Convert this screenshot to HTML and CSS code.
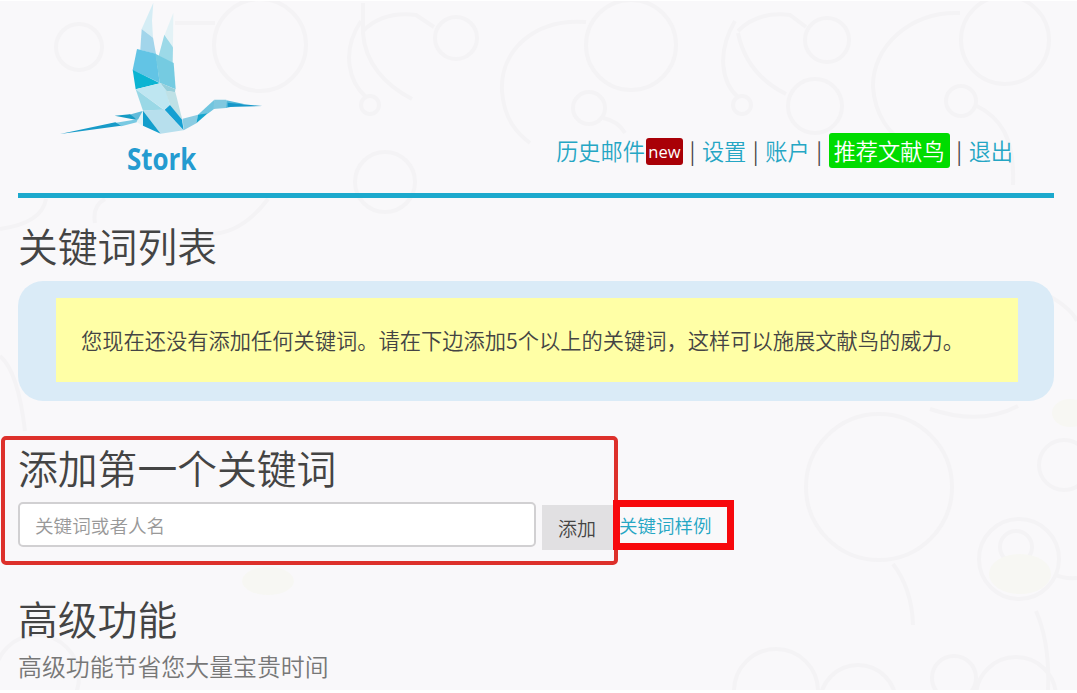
FILE: index.html
```html
<!DOCTYPE html>
<html lang="zh-CN">
<head>
    <meta charset="UTF-8">
    <title>Stork 文献鸟</title>
    <link rel="stylesheet" href="styles.css">
</head>
<body>
    <div class="page">
        <!-- background bubbles -->
        <svg class="bubbles" viewBox="0 0 1077 689" aria-hidden="true">
            <g class="lines">
                <circle cx="79" cy="46" r="23"/>
                <circle cx="260" cy="44" r="46"/>
                <circle cx="456" cy="37" r="21"/>
                <circle cx="631" cy="44" r="45"/>
                <circle cx="827" cy="39" r="22"/>
                <circle cx="1005" cy="39" r="44"/>
                <circle cx="370" cy="104" r="9"/>
                <circle cx="742" cy="104" r="9"/>
                <circle cx="589" cy="107" r="16"/>
                <circle cx="961" cy="100" r="15"/>
                <circle cx="815" cy="105" r="27"/>
                <circle cx="385" cy="181" r="30"/>
                <circle cx="879" cy="486" r="73"/>
                <circle cx="1064" cy="464" r="25"/>
                <circle cx="1019" cy="558" r="40"/>
                <circle cx="1016" cy="546" r="16"/>
                <circle cx="954" cy="677" r="22"/>
                <circle cx="1016" cy="696" r="40"/>
                <circle cx="776" cy="690" r="42"/>
                <circle cx="858" cy="702" r="38"/>
                <circle cx="37" cy="676" r="42"/>
                <path d="M175 22H215M363 2V32C365 62 385 84 412 98M361 20C340 52 350 82 366 96M735 20C716 52 722 82 738 96M738 32C745 66 768 84 786 93M363 30Q383 10 416 14L434 26M738 30Q758 10 790 14L806 26"/>
                <path d="M586 21C535 17 500 49 502 90C504 119 518 133 530 142M960 12C910 10 872 46 873 86C875 115 890 133 905 142M975 104C1000 116 1015 136 1013 184M603 117Q618 120 625 132"/>
                <path d="M893 563Q912 588 913 624M1036 610Q1050 642 1048 689M1054 573Q1063 578 1077 577M0 228Q42 222 46 198M0 355Q18 370 25 430M930 408Q980 425 1018 405M1040 290Q1070 305 1077 320M268 198Q240 235 205 233M95 222Q92 205 105 198"/>
            </g>
            <ellipse class="spot" cx="1020" cy="573" rx="31" ry="20"/>
            <ellipse class="spot" cx="268" cy="580" rx="26" ry="14"/>
            <ellipse class="spot" cx="1070" cy="412" rx="18" ry="14"/>
        </svg>

        <div class="content">
            <header class="header">
                <svg class="logo" viewBox="0 0 660 540" role="img" aria-label="Stork">
                    <polygon fill="#d5edf5" points="310,8 275,87 309,113 306,62"/>
                    <polygon fill="#e3f2f6" points="370,38 344,104 369,142"/>
                    <polygon fill="#a2d5eb" points="275,87 309,113 318,162 271,150"/>
                    <polygon fill="#9cd9e8" points="343,104 369,142 368,190 326,168"/>
                    <polygon fill="#62c4e5" points="261,147 318,161 329,248 248,210"/>
                    <polygon fill="#75cbe1" points="316,161 371,189 377,268 329,248"/>
                    <polygon fill="#0bb4d2" points="248,209 330,250 257,268"/>
                    <polygon fill="#bee6f1" points="257,268 330,250 348,270 360,316 342,329"/>
                    <polygon fill="#96cfdb" points="330,248 376,268 375,277 350,273"/>
                    <polygon fill="#bfe1e6" points="346,272 376,276 399,367 360,315"/>
                    <polygon fill="#9ad8e6" points="257,268 342,330 279,332"/>
                    <polygon fill="#b7dfed" points="279,332 342,328 400,391 332,401"/>
                    <polygon fill="#149fd2" points="360,315 344,329 401,391 396,359"/>
                    <polygon fill="#139ecc" points="279,332 332,401 279,377"/>
                    <polygon fill="#e4f3f6" points="279,332 279,378 260,366"/>
                    <polygon fill="#61bbda" points="278,333 235,345 264,359"/>
                    <polygon fill="#159bc4" points="194,347 240,343 264,361"/>
                    <polygon fill="#79c9e2" points="180,371 262,358 260,367 214,379"/>
                    <polygon fill="#189bc8" points="30,402 196,367 213,377"/>
                    <polygon fill="#8bcce2" points="398,356 444,344 439,370 401,391"/>
                    <polygon fill="#16a6ce" points="444,344 487,328 439,370"/>
                    <polygon fill="#70c5df" points="444,344 493,299 496,324 475,340"/>
                    <polygon fill="#80c8df" points="493,299 529,299 528,324 490,327"/>
                    <polygon fill="#54b9d9" points="529,301 582,312 528,324"/>
                    <polygon fill="#1697c9" points="533,308 637,318 533,321"/>
                    <text class="logo-text" x="231" y="510" textLength="208" lengthAdjust="spacingAndGlyphs">Stork</text>
                </svg>
                <nav class="nav">
                    <a href="#">历史邮件</a><span class="new">new</span>
                    <span class="sep">|</span>
                    <a href="#">设置</a>
                    <span class="sep">|</span>
                    <a href="#">账户</a>
                    <span class="sep">|</span>
                    <a href="#" class="recommend">推荐文献鸟</a>
                    <span class="sep">|</span>
                    <a href="#">退出</a>
                </nav>
            </header>

            <section class="keywords">
                <h2>关键词列表</h2>
                <div class="panel">
                    <div class="notice">您现在还没有添加任何关键词。请在下边添加5个以上的关键词，这样可以施展文献鸟的威力。</div>
                </div>
            </section>

            <section class="add">
                <h2>添加第一个关键词</h2>
                <div class="form-row">
                    <input type="text" placeholder="关键词或者人名">
                    <button type="button">添加</button>
                    <a href="#">关键词样例</a>
                </div>
            </section>

            <section class="advanced">
                <h2>高级功能</h2>
                <p>高级功能节省您大量宝贵时间</p>
            </section>
        </div>

        <div class="mark mark-form"></div>
        <div class="mark mark-example"></div>
    </div>
</body>
</html>
```

FILE: styles.css
```css
* {
    box-sizing: border-box;
}
body {
    margin: 0;
    padding-top: 1px;
    background: #fff;
    color: #444;
    font-family: "Noto Sans CJK SC", sans-serif;
    font-weight: 350;
    overflow: hidden;
}
a {
    color: #25a6c4;
    text-decoration: none;
}
h2 {
    margin: 0;
    font-size: 39.8px;
    font-weight: 350;
    line-height: 60px;
}
.page {
    position: relative;
    height: 689px;
    background: #f9f8fa;
    overflow: hidden;
}
.bubbles {
    position: absolute;
    inset: 0;
    width: 1077px;
    height: 689px;
}
.bubbles .lines {
    fill: none;
    stroke: #f4f3f5;
    stroke-width: 4;
}
.bubbles .spot {
    fill: #f7f7f3;
}
.content {
    position: relative;
    padding: 0 23px 0 18px;
}

/* header */
.header {
    display: flex;
    justify-content: space-between;
    height: 197px;
    border-bottom: 5px solid #1ca9cd;
}
.logo {
    width: 220px;
    height: 180px;
    margin: -1px 0 0 32px;
}
.logo-text {
    font-family: "Open Sans", sans-serif;
    font-size: 90px;
    font-weight: 700;
    fill: #249bd0;
}
.nav {
    display: flex;
    align-items: center;
    height: 36px;
    margin: 131px 41px 0 0;
    font-size: 22.2px;
    white-space: nowrap;
}
.new {
    width: 37px;
    height: 27px;
    margin: 3px 0 0 1px;
    border-radius: 3px;
    background: #a90007;
    color: #fff;
    font-family: "Open Sans", sans-serif;
    font-size: 16.5px;
    font-weight: 500;
    line-height: 27px;
    text-align: center;
}
.sep {
    width: 19px;
    text-align: center;
}
.recommend {
    padding: 0 5px;
    border-radius: 3px;
    background: #00dc00;
    color: #fff;
    line-height: 35px;
}

/* keyword list */
.keywords {
    padding-top: 17px;
}
.panel {
    height: 120px;
    margin-top: 6px;
    padding: 17px 36px 19px 38px;
    border-radius: 25px;
    background: #daebf7;
}
.notice {
    height: 84px;
    padding-left: 25px;
    background: #ffffa6;
    font-size: 21.25px;
    line-height: 84px;
    white-space: nowrap;
}

/* add form */
.add {
    padding-top: 36px;
}
.form-row {
    display: flex;
    align-items: flex-start;
    height: 48px;
    margin-top: 5px;
}
.form-row input {
    width: 518px;
    height: 45px;
    padding: 0 15px;
    border: 2px solid #d1d0d2;
    border-radius: 5px;
    background: #fff;
    font: inherit;
    font-size: 18.6px;
}
.form-row input::placeholder {
    color: #999;
}
.form-row button {
    width: 72px;
    height: 45px;
    margin: 3px 0 0 6px;
    padding: 0 2px 0 0;
    border: 0;
    background: #e1e0e2;
    color: #444;
    font: inherit;
    font-size: 19px;
}
.form-row a {
    margin-left: 5px;
    font-size: 18.5px;
    line-height: 47px;
}

/* advanced */
.advanced {
    padding-top: 38px;
}
.advanced p {
    margin: 0;
    padding-top: 1px;
    color: #777;
    font-size: 23.9px;
    line-height: 34px;
}

/* red marker boxes */
.mark {
    position: absolute;
}
.mark-form {
    left: 1px;
    top: 435px;
    width: 617px;
    height: 129px;
    border: 4px solid #dd302b;
    border-radius: 5px;
}
.mark-example {
    left: 613px;
    top: 499px;
    width: 121px;
    height: 50px;
    border: 7px solid #f7080c;
}
```
